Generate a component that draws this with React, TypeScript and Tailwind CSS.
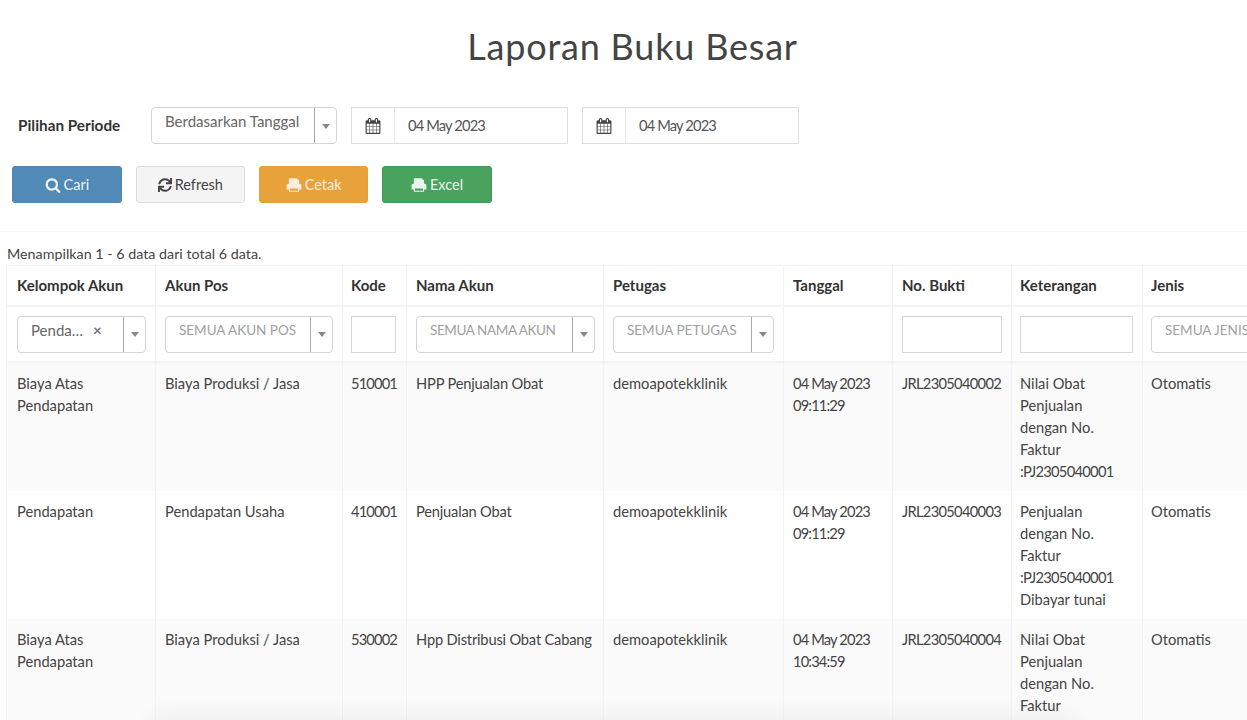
import React from "react";
import { FaSync } from "react-icons/fa";

const font = "font-['Lato','Noto_Sans',sans-serif]";

const rows = [
  {
    kelompok: ["Biaya Atas", "Pendapatan"],
    pos: "Biaya Produksi / Jasa",
    kode: "510001",
    nama: "HPP Penjualan Obat",
    tanggal: ["04 May 2023", "09:11:29"],
    bukti: "JRL2305040002",
    ket: ["Nilai Obat", "Penjualan", "dengan No.", "Faktur", ":PJ2305040001"],
    bg: "bg-[#fafafa]",
    height: "h-[128px]",
  },
  {
    kelompok: ["Pendapatan"],
    pos: "Pendapatan Usaha",
    kode: "410001",
    nama: "Penjualan Obat",
    tanggal: ["04 May 2023", "09:11:29"],
    bukti: "JRL2305040003",
    ket: ["Penjualan", "dengan No.", "Faktur", ":PJ2305040001", "Dibayar tunai"],
    bg: "bg-white",
    height: "h-[128px]",
  },
  {
    kelompok: ["Biaya Atas", "Pendapatan"],
    pos: "Biaya Produksi / Jasa",
    kode: "530002",
    nama: "Hpp Distribusi Obat Cabang",
    tanggal: ["04 May 2023", "10:34:59"],
    bukti: "JRL2305040004",
    ket: ["Nilai Obat", "Penjualan", "dengan No.", "Faktur", ":PJ2305040001"],
    bg: "bg-[#fafafa]",
    height: "h-[128px]",
  },
];

function Fa({ d, size = 16 }: { d: string; size?: number }) {
  return (
    <svg width={size} height={size} viewBox="0 0 1792 1792" fill="currentColor">
      <path d={d} />
    </svg>
  );
}

const printPath =
  "M448 1536h896v-256h-896v256zm1280-576v416q0 13-9.5 22.5t-22.5 9.5h-224v160q0 40-28 68t-68 28h-960q-40 0-68-28t-28-68v-160h-224q-13 0-22.5-9.5t-9.5-22.5v-416q0-79 56.5-135.5t135.5-56.5h64v-544q0-40 28-68t68-28h672q40 0 88 20t76 48l152 152q28 28 48 76t20 88v256h64q79 0 135.5 56.5t56.5 135.5z";
const searchPath =
  "M1216 832q0-185-131.5-316.5t-316.5-131.5-316.5 131.5-131.5 316.5 131.5 316.5 316.5 131.5 316.5-131.5 131.5-316.5zm512 832q0 52-38 90t-90 38q-54 0-90-38l-343-342q-179 124-399 124-143 0-273.5-55.5t-225-150-150-225-55.5-273.5 55.5-273.5 150-225 225-150 273.5-55.5 273.5 55.5 225 150 150 225 55.5 273.5q0 220-124 399l343 343q37 37 37 90z";
const calendarPath =
  "M192 1664h288v-288h-288v288zm352 0h320v-288h-320v288zm-352-352h288v-320h-288v320zm352 0h320v-320h-320v320zm-352-384h288v-288h-288v288zm736 736h320v-288h-320v288zm-384-736h320v-288h-320v288zm768 736h288v-288h-288v288zm-384-352h320v-320h-320v320zm-352-864v-288q0-13-9.5-22.5t-22.5-9.5h-64q-13 0-22.5 9.5t-9.5 22.5v288q0 13 9.5 22.5t22.5 9.5h64q13 0 22.5-9.5t9.5-22.5zm736 864h288v-320h-288v320zm-384-384h320v-288h-320v288zm384 0h288v-288h-288v288zm32-480v-288q0-13-9.5-22.5t-22.5-9.5h-64q-13 0-22.5 9.5t-9.5 22.5v288q0 13 9.5 22.5t22.5 9.5h64q13 0 22.5-9.5t9.5-22.5zm384-64v1280q0 52-38 90t-90 38h-1408q-52 0-90-38t-38-90v-1280q0-52 38-90t90-38h128v-96q0-66 47-113t113-47h64q66 0 113 47t47 113v96h384v-96q0-66 47-113t113-47h64q66 0 113 47t47 113v96h128q52 0 90 38t38 90z";

function Caret() {
  return <span className="mt-[1px] h-0 w-0 border-x-[4px] border-t-[5px] border-x-transparent border-t-[#888]" />;
}

function Select({ label, width, muted = false, clear = false, tight = false }: { label: string; width: string; muted?: boolean; clear?: boolean; tight?: boolean }) {
  return (
    <div className={`flex h-[37px] ${width} rounded-[4px] border border-[#d4d4d4] bg-white`}>
      <div className={`flex min-w-0 flex-1 items-start overflow-hidden whitespace-nowrap pl-[13px] pt-[3px] leading-[20px] ${muted ? "text-[13.5px] text-[#a0a0a0]" : "text-[15px] text-[#666]"} ${tight ? "tracking-[-0.4px]" : ""}`}>
        {label}
        {clear && <span className="ml-[10px] font-bold text-[#777]">×</span>}
      </div>
      <div className="flex w-[22px] shrink-0 items-center justify-center border-l border-[#aaa]">
        <Caret />
      </div>
    </div>
  );
}

function DateBox({ value }: { value: string }) {
  return (
    <div className="flex h-[37px] w-[217px] border border-[#dedede] bg-white">
      <div className="flex w-[43px] items-center justify-center border-r border-[#e6e6e6] text-[#444]">
        <Fa d={calendarPath} size={16} />
      </div>
      <div className="flex items-center pl-[13px] text-[14.7px] tracking-[-0.85px] text-[#555]">{value}</div>
    </div>
  );
}

function Btn({ icon, label, cls }: { icon: React.ReactNode; label: string; cls: string }) {
  return (
    <button className={`flex h-[37px] w-[109.4px] items-center justify-center gap-[3px] rounded-[3px] border text-[14.5px] ${cls}`}>
      {icon}
      {label}
    </button>
  );
}

const line = "border-r border-[#f2f2f2]";
const under = "border-b-2 border-b-[#f2f2f2]";
// left padding per column, the columns do not share one inset in the picture
const pads = ["pl-[10px]", "pl-[9px]", "pl-[8px]", "pl-[9px]", "pl-[9px]", "pl-[9px]", "pl-[9px]", "pl-[8px]", "pl-[8px]"];
const th = `${line} ${under} pr-[4px] align-middle text-left text-[15px] font-bold text-[#333]`;
const tf = `${line} ${under} pr-[4px] align-middle`;
const td = `${line} pr-[4px] pt-[9px] align-top text-[14.7px] leading-[22px] text-[#444]`;
const num = "tracking-[-0.85px]";
const longNum = "tracking-[-0.7px]";

export default function App() {
  return (
    <div className={`relative h-[720px] w-[1247px] overflow-hidden bg-white ${font}`}>
      <h1 className="pb-[2px] pl-[18px] pt-[22px] text-center text-[36px] leading-[48px] tracking-[0.8px] text-[#444]">Laporan Buku Besar</h1>

      <div className="mt-[35px] flex items-center pl-[18px]">
        <label className="w-[133px] text-[15.3px] font-bold text-[#333]">Pilihan Periode</label>
        <Select label="Berdasarkan Tanggal" width="w-[186px]" />
        <div className="ml-[14px] flex gap-[14px]">
          <DateBox value="04 May 2023" />
          <DateBox value="04 May 2023" />
        </div>
      </div>

      <div className="mt-[22px] flex gap-[14px] pl-[12.2px]">
        <Btn icon={<Fa d={searchPath} />} label="Cari" cls="border-[#4f86b3] bg-[#528ab7] text-[#eef4f8]" />
        <Btn icon={<FaSync size={14} />} label="Refresh" cls="border-[#dcdcdc] bg-[#f4f4f4] text-[#444]" />
        <Btn icon={<Fa d={printPath} />} label="Cetak" cls="border-[#e5a03c] bg-[#e8a23c] text-[#fbeeda]" />
        <Btn icon={<Fa d={printPath} />} label="Excel" cls="border-[#3f9a58] bg-[#49a35f] text-[#e8f5ec]" />
      </div>

      <div className="mt-[28px] border-t border-[#f4f4f4] pl-[7px] pt-[12px]">
        <p className="h-[21px] text-[14.3px] leading-[20px] text-[#444]">Menampilkan 1 - 6 data dari total 6 data.</p>
        <table className="-ml-[1px] w-[1300px] table-fixed border-separate border-spacing-0 border-l border-t border-[#f2f2f2]">
          <colgroup>
            <col className="w-[149px]" />
            <col className="w-[187px]" />
            <col className="w-[64px]" />
            <col className="w-[197px]" />
            <col className="w-[180px]" />
            <col className="w-[109px]" />
            <col className="w-[119px]" />
            <col className="w-[131px]" />
            <col className="w-[164px]" />
          </colgroup>
          <thead>
            <tr className="h-[41px]">
              {["Kelompok Akun", "Akun Pos", "Kode", "Nama Akun", "Petugas", "Tanggal", "No. Bukti", "Keterangan", "Jenis"].map((h, i) => (
                <th key={h} className={`${th} ${pads[i]}`}>{h}</th>
              ))}
            </tr>
            <tr className="h-[56px]">
              <td className={`${tf} ${pads[0]}`}><Select label="Penda…" width="w-[129px]" clear /></td>
              <td className={`${tf} ${pads[1]}`}><Select label="SEMUA AKUN POS" width="w-[168px]" muted /></td>
              <td className={`${tf} ${pads[2]}`}><input className="block h-[37px] w-[45px] border border-[#d8d8d8]" /></td>
              <td className={`${tf} ${pads[3]}`}><Select label="SEMUA NAMA AKUN" width="w-[179px]" muted tight /></td>
              <td className={`${tf} ${pads[4]}`}><Select label="SEMUA PETUGAS" width="w-[161px]" muted /></td>
              <td className={`${tf} ${pads[5]}`} />
              <td className={`${tf} ${pads[6]}`}><input className="block h-[37px] w-[100px] border border-[#d8d8d8]" /></td>
              <td className={`${tf} ${pads[7]}`}><input className="block h-[37px] w-[113px] border border-[#d8d8d8]" /></td>
              <td className={`${tf} ${pads[8]}`}><Select label="SEMUA JENIS" width="w-[150px]" muted /></td>
            </tr>
          </thead>
          <tbody>
            {rows.map((r) => (
              <tr key={r.bukti} className={`${r.bg} ${r.height}`}>
                <td className={`${td} ${pads[0]}`}>{r.kelompok.map((l) => <div key={l}>{l}</div>)}</td>
                <td className={`${td} ${pads[1]}`}>{r.pos}</td>
                <td className={`${td} ${pads[2]} ${num}`}>{r.kode}</td>
                <td className={`${td} ${pads[3]} whitespace-nowrap tracking-[-0.2px]`}>{r.nama}</td>
                <td className={`${td} ${pads[4]}`}>demoapotekklinik</td>
                <td className={`${td} ${pads[5]} ${num}`}>{r.tanggal.map((l) => <div key={l}>{l}</div>)}</td>
                <td className={`${td} ${pads[6]} ${longNum}`}>{r.bukti}</td>
                <td className={`${td} ${pads[7]}`}>{r.ket.map((l) => <div key={l} className={l.startsWith(":") ? longNum : ""}>{l}</div>)}</td>
                <td className={`${td} ${pads[8]}`}>Otomatis</td>
              </tr>
            ))}
          </tbody>
        </table>
      </div>

      {/* faint shadow rising from whatever sits below the fold */}
      <div className="absolute bottom-[-24px] left-[150px] right-[170px] h-[24px] shadow-[0_0_24px_rgba(0,0,0,0.07)]" />
    </div>
  );
}
